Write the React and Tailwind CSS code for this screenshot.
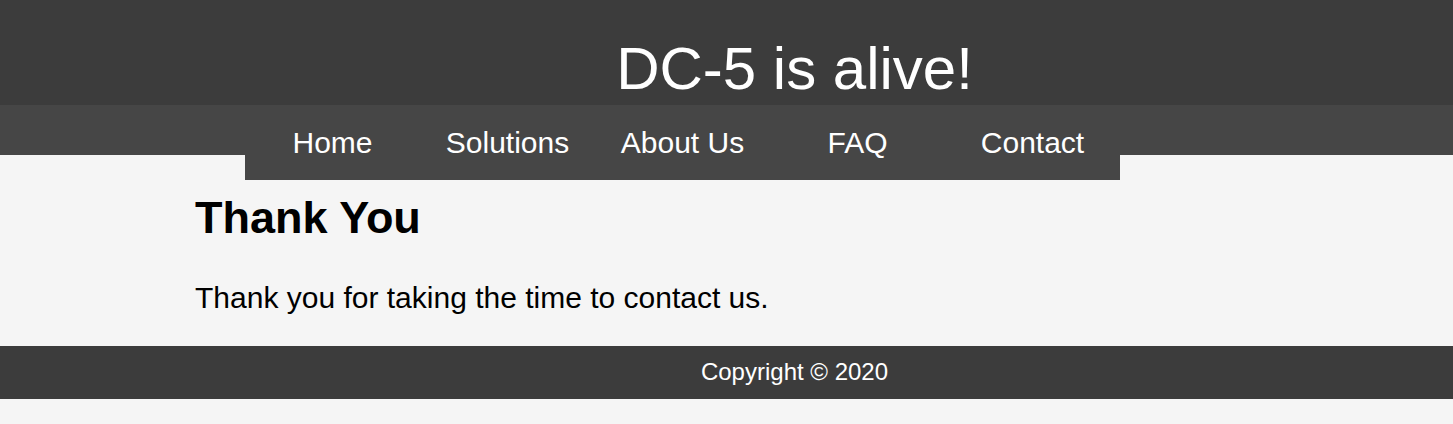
export default function App() {
  const items = ["Home", "Solutions", "About Us", "FAQ", "Contact"];
  return (
    <div className="min-h-[424px] bg-[#f5f5f5]" style={{ fontFamily: '"Liberation Sans", Arial, sans-serif' }}>
      <header className="h-[105px] bg-[#3c3c3c] pt-[39px] pl-[136px]">
        <h1 className="text-center text-[60px] leading-none font-normal text-white">DC-5 is alive!</h1>
      </header>
      <nav className="h-[50px] bg-[#464646]">
        <ul className="relative z-10 ml-[245px] flex h-[75px] w-[875px] bg-[#464646]">
          {items.map((t) => (
            <li key={t} className="w-[175px] text-center text-[30px] leading-[75px] text-white">
              {t}
            </li>
          ))}
        </ul>
      </nav>
      <main className="pl-[195px] pt-[40px] pb-[33px] text-black">
        <h2 className="text-[45px] font-bold leading-none">Thank You</h2>
        <p className="mt-[43px] text-[30px] leading-none">Thank you for taking the time to contact us.</p>
      </main>
      <footer className="h-[53px] bg-[#3c3c3c] pt-[14px] pl-[136px]">
        <p className="text-center text-[24px] leading-none text-white">Copyright © 2020</p>
      </footer>
    </div>
  );
}
